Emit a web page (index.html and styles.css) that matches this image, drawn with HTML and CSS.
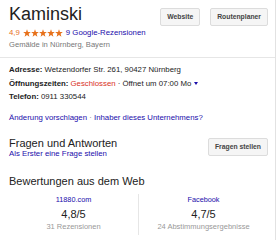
FILE: index.html
```html
<!DOCTYPE html>
<html lang="de">
<head>
<meta charset="utf-8">
<title>Kaminski</title>
<link rel="stylesheet" href="styles.css">
</head>
<body>
<div class="card">
  <header class="head">
    <div class="head-main">
      <h1 class="title">Kaminski</h1>
      <div class="rating">
        <span class="score">4,9</span>
        <svg class="stars" width="40" height="8" viewBox="0 0 50 10" aria-hidden="true">
          <g fill="#e7711b">
            <polygon points="5,0.3 6.2,3.6 9.8,3.7 7,5.9 8,9.6 5,7.5 2,9.6 3,5.9 0.2,3.7 3.8,3.6"/>
            <polygon transform="translate(10 0)" points="5,0.3 6.2,3.6 9.8,3.7 7,5.9 8,9.6 5,7.5 2,9.6 3,5.9 0.2,3.7 3.8,3.6"/>
            <polygon transform="translate(20 0)" points="5,0.3 6.2,3.6 9.8,3.7 7,5.9 8,9.6 5,7.5 2,9.6 3,5.9 0.2,3.7 3.8,3.6"/>
            <polygon transform="translate(30 0)" points="5,0.3 6.2,3.6 9.8,3.7 7,5.9 8,9.6 5,7.5 2,9.6 3,5.9 0.2,3.7 3.8,3.6"/>
            <polygon transform="translate(40 0)" points="5,0.3 6.2,3.6 9.8,3.7 7,5.9 8,9.6 5,7.5 2,9.6 3,5.9 0.2,3.7 3.8,3.6"/>
          </g>
        </svg>
        <a class="link" href="#">9 Google-Rezensionen</a>
      </div>
      <div class="category">Gemälde in Nürnberg, Bayern</div>
    </div>
    <div class="actions">
      <button class="btn" type="button">Website</button>
      <button class="btn" type="button">Routenplaner</button>
    </div>
  </header>

  <section class="info">
    <div class="row"><span class="label">Adresse:</span> Wetzendorfer Str. 261, 90427 Nürnberg</div>
    <div class="row"><span class="label">Öffnungszeiten:</span> <span class="closed">Geschlossen</span> · Öffnet um 07:00 Mo <span class="caret"></span></div>
    <div class="row"><span class="label">Telefon:</span> 0911 330544</div>
    <div class="edit"><a class="link" href="#">Änderung vorschlagen</a> <span class="sep">·</span> <a class="link" href="#">Inhaber dieses Unternehmens?</a></div>
  </section>

  <section class="qa">
    <div class="qa-text">
      <h2 class="heading">Fragen und Antworten</h2>
      <a class="link small" href="#">Als Erster eine Frage stellen</a>
    </div>
    <button class="btn" type="button">Fragen stellen</button>
  </section>

  <section class="web">
    <h2 class="heading">Bewertungen aus dem Web</h2>
    <div class="sources">
      <div class="source">
        <a class="link src-name" href="#">11880.com</a>
        <div class="src-score">4,8/5</div>
        <div class="src-count">31 Rezensionen</div>
      </div>
      <div class="source divided">
        <a class="link src-name" href="#">Facebook</a>
        <div class="src-score">4,7/5</div>
        <div class="src-count">24 Abstimmungsergebnisse</div>
      </div>
    </div>
  </section>
</div>
</body>
</html>
```

FILE: styles.css
```css
* { box-sizing: border-box; }

html, body {
  margin: 0;
  padding: 0;
  background: #fff;
}

body {
  font-family: "Liberation Sans", Arial, sans-serif;
  font-size: 7.8px;
  color: #222;
  width: 279px;
  height: 240px;
  overflow: hidden;
}

.card {
  width: 276px;
  height: 240px;
  border-right: 1px solid #e2e2e2;
}

.link {
  color: #1a0dab;
  text-decoration: none;
}

.head {
  display: flex;
  justify-content: space-between;
  align-items: flex-start;
  padding: 3px 7px 6px 9px;
  border-bottom: 1px solid #e6e6e6;
}

.title {
  margin: 0;
  font-size: 18px;
  font-weight: normal;
  line-height: 22px;
  color: #222;
}

.rating {
  display: flex;
  align-items: center;
  margin-top: 2px;
  height: 12px;
  line-height: 12px;
}

.score {
  color: #e7711b;
  margin-right: 3px;
}

.stars {
  display: block;
  margin-right: 3px;
}

.category {
  line-height: 12px;
  color: #777;
  font-size: 7.6px;
}

.actions {
  display: flex;
  gap: 10px;
  margin-top: 5px;
}

.btn {
  font-family: "Liberation Sans", Arial, sans-serif;
  font-size: 6.8px;
  font-weight: bold;
  color: #444;
  background: #f5f5f5;
  border: 1px solid #dcdcdc;
  border-radius: 2px;
  height: 18px;
  line-height: 16px;
  padding: 0 6px;
  margin: 0;
  cursor: pointer;
}

.info {
  padding: 5px 9px 0 9px;
}

.row {
  line-height: 13.5px;
  white-space: nowrap;
}

.label {
  font-weight: bold;
}

.closed {
  color: #d93025;
}

.caret {
  display: inline-block;
  width: 0;
  height: 0;
  border-left: 2.5px solid transparent;
  border-right: 2.5px solid transparent;
  border-top: 3px solid #1a0dab;
  vertical-align: middle;
  margin-left: 1px;
}

.edit {
  margin-top: 8px;
  line-height: 12px;
}

.sep {
  color: #777;
}

.qa {
  display: flex;
  justify-content: space-between;
  align-items: center;
  padding: 13px 7px 0 9px;
}

.heading {
  margin: 0;
  font-size: 11px;
  font-weight: normal;
  line-height: 13px;
  color: #222;
}

.small {
  display: block;
  line-height: 8px;
}

.web {
  padding: 17px 7px 0 9px;
}

.sources {
  display: flex;
  margin-top: 6px;
}

.source {
  flex: 1 1 0;
  display: flex;
  flex-direction: column;
  align-items: center;
  padding-top: 1px;
  padding-bottom: 3px;
}

.divided {
  border-left: 1px solid #e6e6e6;
}

.src-name {
  font-size: 7.3px;
  line-height: 10px;
}

.src-score {
  font-size: 11px;
  line-height: 14px;
  margin-top: 2px;
  color: #222;
}

.src-count {
  font-size: 7.5px;
  line-height: 10px;
  margin-top: 1px;
  color: #999;
  white-space: nowrap;
}
```
